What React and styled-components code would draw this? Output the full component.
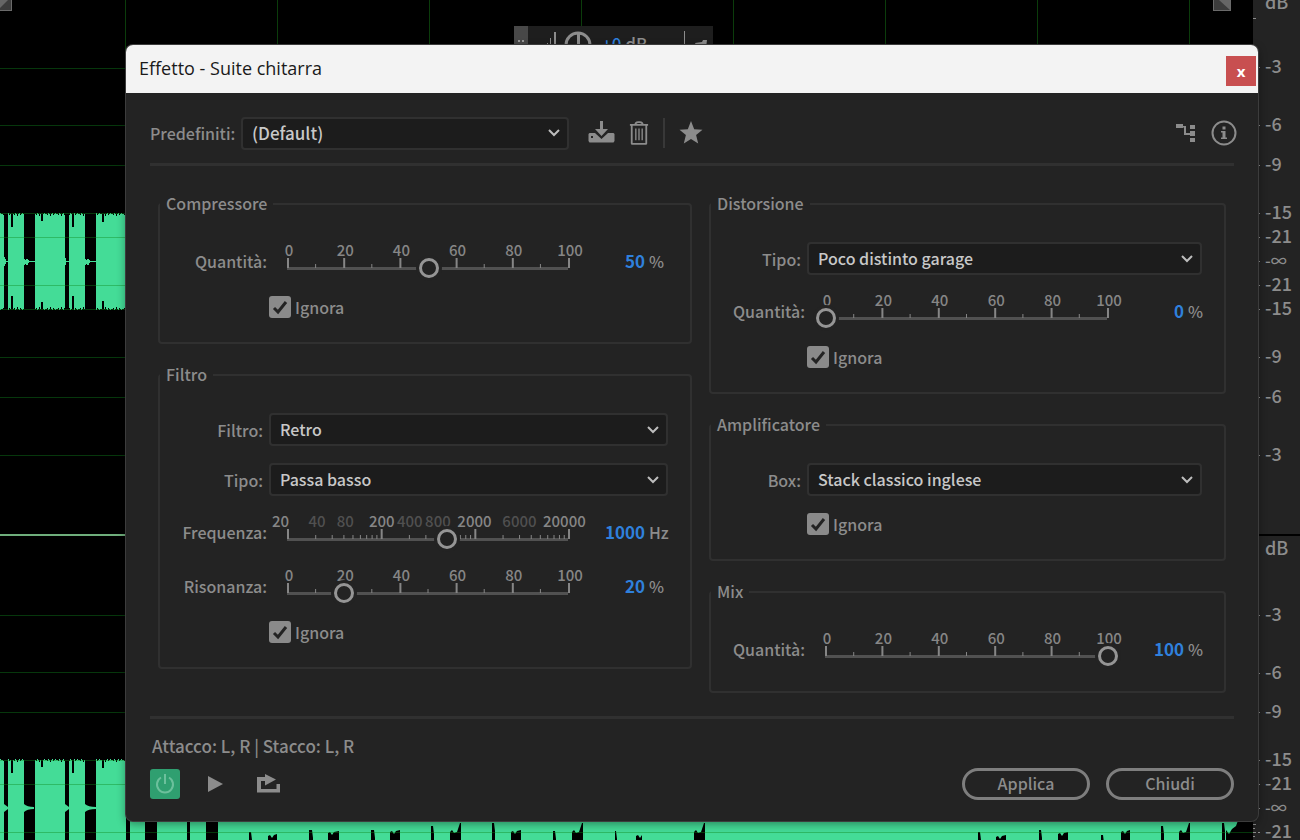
import React, { useId, useState } from 'react'
import styled, { createGlobalStyle, css } from 'styled-components'

const colors = {
  panel: '#232323',
  field: '#1c1c1c',
  line: '#303030',
  text: '#8c8c8c',
  dim: '#505050',
  bright: '#c8c8c8',
  blue: '#2f80dc',
  wave: '#44dc97',
  grid: '#0b3c0b',
}

const uiFont = "'Noto Sans CJK SC', 'Noto Sans', sans-serif"

const GlobalStyle = createGlobalStyle`
  * {
    box-sizing: border-box;
  }
  body {
    margin: 0;
    background: #000;
  }
  button, input, select {
    font: inherit;
    color: inherit;
  }
`

const Editor = styled.main`
  position: relative;
  display: flex;
  min-height: 100vh;
  overflow: hidden;
  background: #000;
  color: ${colors.text};
  font: 500 16px/24px ${uiFont};
`

const WaveCanvas = styled.svg`
  flex: 1;
  min-width: 0;
  align-self: stretch;
`

const RulerCanvas = styled.svg`
  flex: none;
  width: 47px;
  align-self: stretch;
  background: ${colors.panel};
  fill: ${colors.text};
  font-size: 18px;
`

/* floating volume control */
const Hud = styled.div`
  position: absolute;
  top: 26px;
  left: 514px;
  display: flex;
  align-items: center;
  width: 199px;
  height: 36px;
  background: #1e1e1e;
`

const HudArt = styled.svg`
  flex: none;
  width: 88px;
  height: 36px;
`

const HudValue = styled.span`
  flex: 1;
  font-size: 17px;
  b {
    color: ${colors.blue};
    font-weight: 500;
  }
`

const HudPin = styled.svg`
  flex: none;
  width: 32px;
  height: 36px;
`

/* effect window */
const Dialog = styled.section`
  position: absolute;
  top: 45px;
  left: 126px;
  right: 42px;
  border-radius: 7px;
  background: ${colors.panel};
  box-shadow: 0 0 0 1px #3c3c3c, 0 3px 10px rgba(0, 0, 0, 0.4);
`

const TitleBar = styled.header`
  display: flex;
  align-items: center;
  justify-content: space-between;
  height: 48px;
  padding: 4px 2px 0 13px;
  border-radius: 7px 7px 0 0;
  background: #f3f3f3;
  color: #1a1a1a;
`

const Title = styled.h1`
  margin: 0;
  padding-bottom: 6px;
  font: 400 18px/24px 'Open Sans', sans-serif;
`

const CloseButton = styled.button`
  width: 30px;
  height: 30px;
  padding: 0;
  border: 0;
  background: #c84f50;
  color: #fff;
  font: 700 15px/26px 'Open Sans', sans-serif;
`

const Body = styled.div`
  padding: 24px 24px 21px;
`

const PresetBar = styled.div`
  display: flex;
  align-items: center;
  height: 32px;
  margin: 0 -3px 14px 0;
`

const PresetLabel = styled.label`
  flex: none;
  width: 91px;
`

const PresetSelect = styled.div`
  flex: 0 1 328px;
  display: grid;
  font-size: 17px;
`

const IconButton = styled.button`
  display: flex;
  flex: none;
  padding: 0;
  border: 0;
  background: none;
  color: ${colors.text};
  svg {
    display: block;
  }
  svg:not([fill]) {
    fill: currentColor;
  }
`

const PresetTools = styled.div`
  display: flex;
  flex: 1;
  align-items: center;
  gap: 14px;
  padding-left: 19px;
`

const Divider = styled.span`
  width: 2px;
  height: 30px;
  background: #383838;
`

const Spacer = styled.span`
  flex: 1;
`

const Rule = styled.hr`
  height: 3px;
  margin: 0;
  border: 0;
  background: ${colors.line};
`

const Columns = styled.div`
  display: grid;
  grid-template-columns: 533fr 516fr;
  gap: 17px;
  align-items: start;
  padding: 26px 8px 23px;
`

const Column = styled.div`
  display: grid;
  gap: 19px;
`

const GroupBox = styled.fieldset`
  min-width: 0;
  margin: 0;
  padding: 26px 22px 24px 0;
  border: 2px solid ${colors.line};
  border-radius: 4px;
`

const Legend = styled.legend`
  padding: 0 6px 2px;
  line-height: 22px;
`

const Rows = styled.div`
  display: grid;
  gap: 17px;
`

const Row = styled.div`
  display: flex;
  align-items: center;
`

const RowLabel = styled.label`
  flex: none;
  width: ${p => p.$width}px;
  padding-right: ${p => (p.$inset ? 4 : 0)}px;
  text-align: right;
`

const SelectBox = styled.div`
  display: grid;
  flex: 1;
  margin-left: ${p => (p.$flush ? 0 : 2)}px;
  select, svg {
    grid-area: 1 / 1;
  }
  svg {
    align-self: center;
    justify-self: end;
    margin-right: 8px;
    pointer-events: none;
  }
`

const Select = styled.select`
  width: 100%;
  height: 33px;
  padding: 0 32px 1px 9px;
  appearance: none;
  border: 2px solid ${colors.line};
  border-radius: 4px;
  background: ${colors.field};
  color: ${colors.bright};
`

const SliderBox = styled.div`
  display: grid;
  flex: 1;
  height: 37px;
  margin-left: 21px;
  > * {
    grid-area: 1 / 1;
  }
`

const Scale = styled.svg`
  width: 100%;
  height: 37px;
  overflow: visible;
  fill: #868686;
  font: 500 15px ${uiFont};
  text-anchor: middle;
`

const thumb = css`
  box-sizing: border-box;
  width: 20px;
  height: 20px;
  border: 3px solid #959595;
  border-radius: 50%;
  background: ${colors.panel};
  box-shadow: 0 0 0 3px ${colors.panel};
`

const Range = styled.input`
  align-self: end;
  width: calc(100% + 20px);
  height: 20px;
  margin: 0 -10px 1px;
  appearance: none;
  background: none;
  &::-webkit-slider-thumb {
    appearance: none;
    ${thumb};
  }
  &::-moz-range-thumb {
    ${thumb};
  }
`

const Value = styled.div`
  display: grid;
  flex: none;
  grid-template-columns: 76px ${p => p.$unitWidth}px;
  gap: 4px;
  align-items: center;
`

const ValueInput = styled.input`
  width: 100%;
  height: 24px;
  padding: 0;
  border: 0;
  background: none;
  color: ${colors.blue};
  font-size: 17px;
  font-weight: 700;
  text-align: right;
`

const CheckLabel = styled.label`
  display: flex;
  align-items: center;
  gap: 4px;
  height: 22px;
  margin-left: ${p => p.$indent + 2}px;
`

const CheckBox = styled.span`
  display: grid;
  input, svg {
    grid-area: 1 / 1;
  }
  input {
    width: 22px;
    height: 22px;
    margin: 0;
    appearance: none;
    border-radius: 3px;
    background: #8a8a8a;
  }
  svg {
    pointer-events: none;
  }
  input:not(:checked) + svg {
    visibility: hidden;
  }
`

const Status = styled.p`
  margin: 15px 0 10px;
  padding-left: 2px;
  font-size: 17px;
`

const Footer = styled.footer`
  display: flex;
  align-items: center;
  justify-content: space-between;
`

const Transport = styled.div`
  display: flex;
  align-items: center;
  gap: 27px;
`

const PowerButton = styled(IconButton)`
  align-items: center;
  justify-content: center;
  width: 30px;
  height: 30px;
  border-radius: 3px;
  background: #2f9f70;
  color: #6cc09c;
`

const Actions = styled.div`
  display: flex;
  gap: 16px;
`

const PillButton = styled.button`
  width: 128px;
  height: 32px;
  padding: 0 0 2px;
  border: 3px solid #7e7e7e;
  border-radius: 16px;
  background: none;
  color: ${colors.text};
  line-height: 24px;
`

const gridRows = [68, 125, 165, 213, 237, 285, 309, 357, 397, 455, 615, 672, 712, 760, 784, 832]
const gridCols = [125, 277, 429, 581, 733, 885, 1037, 1189]

const bursts = [
  { from: 0, to: 4 },
  { from: 8, to: 24, notch: 11, depth: 14 },
  { from: 35, to: 65, notch: 41, depth: 8 },
  { from: 69, to: 85, notch: 72, depth: 14 },
  { from: 96, to: 126, notch: 102, depth: 9 },
]

const jitter = i => [0, 1, 1, 2, 0, 1, 3, 1, 0, 2, 1][i % 11]

const burstPath = ({ from, to, notch, depth }, top, bottom) => {
  const up = []
  const down = []
  for (let x = from; x < to; x += 1) {
    const d = x === notch || x === notch + 1 ? depth : jitter(x)
    up.push(`${x} ${top + d}`, `${x + 1} ${top + d}`)
    down.unshift(`${x + 1} ${bottom - d}`, `${x} ${bottom - d}`)
  }
  return `M${[...up, ...down].join('L')}Z`
}

// dips at the lower edge: [x, width, top]
const dips = [
  [249, 2, 832], [309, 3, 830], [371, 3, 830], [431, 2, 826], [492, 2, 823],
  [553, 2, 831], [615, 1, 831], [978, 2, 832], [1039, 2, 830], [1101, 2, 835],
  [1161, 2, 826], [1222, 2, 823],
]
const crags = [
  [268, 9, 834], [328, 11, 831], [390, 10, 830], [511, 10, 830], [636, 6, 834],
  [996, 10, 835], [1058, 10, 832], [1121, 9, 830],
]
const saws = [450, 572, 694, 1179]

const Waveform = () => (
  <WaveCanvas aria-hidden="true" fill={colors.wave}>
    {gridCols.map(x => <rect key={x} x={x} width="1" height="100%" fill={colors.grid} />)}
    {bursts.map(b => (
      <g key={b.from}>
        <path d={burstPath(b, 213, 310)} />
        <path d={burstPath(b, 759, 858)} />
      </g>
    ))}
    <rect y="261" width="126" height="1" />
    <path d="M24 259h1v1h1v-1h2v1h1v3h-1v2h-2v-1h-1v1h-1zM85 259h1v1h1v-1h2v1h1v3h-1v2h-2v-1h-1v1h-1zM4 257h1v2h1v5h-1v2h-1zM65 258h1v7h-1z" />
    <path d="M24 804q3 3 10 3v2q-7 0-10 3zM85 804q3 3 11 3v2q-8 0-11 3zM4 804l4 3v2l-4 3zM65 804l4 3v2l-4 3z" />
    <rect x="130" y="815" width="15" height="100%" />
    <rect x="157" y="815" width="30" height="100%" />
    <rect x="190" y="815" width="16" height="100%" />
    <rect x="218" y="815" width="1008" height="100%" />
    <path d="M1226 815H1240L1236 826L1232 829L1229 834L1226 830Z" />
    <g fill="#000">
      {dips.map(([x, w, y]) => <path key={x} d={`M${x} 900V${y}h${w}l1 8V900z`} />)}
      {crags.map(([x, w, y]) => (
        <path key={x} d={`M${x} 900V${y + 2}l2 -1l2 3l2 -3l${w - 6} -1V900z`} />
      ))}
      {saws.map(x => <path key={x} d={`M${x} 900V832l2 -2l2 3l3 -1l3 -9h1V900z`} />)}
    </g>
    {gridRows.map(y => (
      <rect key={y} y={y} width="100%" height="1" fill="#0f8a1e" opacity="0.4" />
    ))}
    <rect y="534" width="126" height="2" fill="#6fae7c" />
    <path d="M0 0H12V11H0ZM1213 0H1231V11H1213Z" fill="#6a6a6a" />
    <path d="M0 0H11V10H0ZM1214 0H1230V10H1214Z" fill="#3c3c3c" />
    <path d="M0 8L8 0H0ZM1219 0H1230V10Z" fill="#666" />
  </WaveCanvas>
)

const rulerMarks = [
  [3, 'dB'], [67, '-3'], [125, '-6'], [165, '-9'], [213, '-15'], [237, '-21'], [261, '-∞'],
  [285, '-21'], [309, '-15'], [357, '-9'], [397, '-6'], [455, '-3'], [549, 'dB'], [615, '-3'],
  [673, '-6'], [712, '-9'], [760, '-15'], [784, '-21'], [808, '-∞'], [832, '-21'],
]

const Ruler = () => (
  <RulerCanvas role="img" aria-label="dB">
    <rect y="18" width="3" height="1" />
    <rect x="5" y="534" width="42" height="2" fill="#000" />
    {rulerMarks.map(([y, text]) => (
      <g key={y}>
        {text !== 'dB' && <rect x="5" y={y} width="2" height="1" />}
        <text x="12" y={y + 6} fontSize={text === '-∞' ? 16 : undefined}>{text}</text>
      </g>
    ))}
    <path d="M0 824h3v1H0zM0 828h2v1H0zM0 832h3v1H0zM0 836h2v1H0z" />
  </RulerCanvas>
)

const VolumeHud = () => (
  <Hud>
    <HudArt viewBox="0 0 88 36" fill={colors.text}>
      <rect width="14" height="36" fill="#484848" />
      <path d="M4 14h2v2H4zM8 14h2v2H8zM4 18h2v2H4zM8 18h2v2H8z" fill="#999" />
      <path d="M33 17h1v12h-1zM36 12h1v17h-1zM40 6h2v23h-2z" />
      <circle cx="64" cy="19" r="12" fill="none" stroke={colors.text} strokeWidth="3" />
      <path d="M63 7h3v12h-3z" />
    </HudArt>
    <HudValue><b>+0</b> dB</HudValue>
    <HudPin viewBox="0 0 32 36" fill={colors.text}>
      <path d="M3 5h1v28H3z" />
      <path d="M14 17l7-1 1-2h4l-1 8-6 6z" />
    </HudPin>
  </Hud>
)

const Dropdown = ({ id, options, flush }) => (
  <SelectBox $flush={flush}>
    <Select id={id}>
      {options.map(o => <option key={o}>{o}</option>)}
    </Select>
    <svg width="14" height="10" viewBox="0 0 14 10" fill="none" stroke="#bdbdbd" strokeWidth="2">
      <path d="M2 2L7 7L12 2" />
    </svg>
  </SelectBox>
)

const SelectRow = ({ label, labelWidth, options }) => {
  const id = useId()
  return (
    <Row>
      <RowLabel htmlFor={id} $width={labelWidth} $inset>{label}</RowLabel>
      <Dropdown id={id} options={options} />
    </Row>
  )
}

const linear = {
  labels: [0, 20, 40, 60, 80, 100].map(v => ({ at: v, text: v })),
  ticks: [0, 10, 20, 30, 40, 50, 60, 70, 80, 90, 100].map(v => ({ at: v, major: v % 20 === 0 })),
  format: v => Math.round(v),
}

const logPosition = hz => (Math.log10(hz / 20) / 3) * 100

const frequency = {
  labels: [
    { at: -3, text: 20 },
    { at: 10, text: 40, dim: true },
    { at: 20, text: 80, dim: true },
    { at: 33, text: 200 },
    { at: 43, text: 400, dim: true },
    { at: 53, text: 800, dim: true },
    { at: 66, text: 2000 },
    { at: 82, text: 6000, dim: true },
    { at: 98, text: 20000 },
  ],
  ticks: [20, 200, 2000]
    .flatMap(base => [1, 2, 3, 4, 5, 6, 7, 8, 9].map(k => ({ at: logPosition(base * k), major: k === 1 })))
    .concat({ at: 100, major: true }),
  format: v => Math.round(20 * 10 ** ((v / 100) * 3)),
}

const SliderRow = ({ label, labelWidth, scale = linear, initial, unit = '%', unitWidth }) => {
  const id = useId()
  const [position, setPosition] = useState(initial)
  return (
    <Row>
      <RowLabel htmlFor={id} $width={labelWidth}>{label}</RowLabel>
      <SliderBox>
        <Scale aria-hidden="true">
          <rect x="-1" y="25" width="100%" height="3" fill="#515151" />
          {scale.ticks.map(({ at, major }) => (
            <rect key={at} x={`${at}%`} y={major ? 16 : 22} width={major ? 2 : 1} height={major ? 10 : 4} transform="translate(-1 0)" />
          ))}
          {scale.labels.map(({ at, text, dim }) => (
            <text key={text} x={`${at}%`} y="14" dx="1" fill={dim ? colors.dim : undefined}>{text}</text>
          ))}
        </Scale>
        <Range
          id={id}
          type="range"
          min="0"
          max="100"
          step="any"
          value={position}
          onChange={e => setPosition(Number(e.target.value))}
        />
      </SliderBox>
      <Value $unitWidth={unitWidth}>
        <ValueInput aria-label={label} readOnly value={scale.format(position)} />
        <span>{unit}</span>
      </Value>
    </Row>
  )
}

const Bypass = ({ indent }) => (
  <CheckLabel $indent={indent}>
    <CheckBox>
      <input type="checkbox" defaultChecked />
      <svg width="22" height="22" viewBox="0 0 22 22" fill="none" stroke={colors.panel} strokeWidth="3">
        <path d="M5 12L9 16L17 6" />
      </svg>
    </CheckBox>
    Ignora
  </CheckLabel>
)

const Group = ({ title, children }) => (
  <GroupBox>
    <Legend>{title}</Legend>
    <Rows>{children}</Rows>
  </GroupBox>
)

const left = { labelWidth: 107, unitWidth: 19 }
const right = { labelWidth: 94, unitWidth: 14 }

const App = () => (
  <>
    <GlobalStyle />
    <Editor>
      <Waveform />
      <Ruler />
      <VolumeHud />
      <Dialog role="dialog" aria-labelledby="dialog-title">
        <TitleBar>
          <Title id="dialog-title">Effetto - Suite chitarra</Title>
          <CloseButton>x</CloseButton>
        </TitleBar>
        <Body>
          <PresetBar>
            <PresetLabel htmlFor="preset">Predefiniti:</PresetLabel>
            <PresetSelect>
              <Dropdown id="preset" options={['(Default)']} flush />
            </PresetSelect>
            <PresetTools>
              <IconButton aria-label="Salva">
                <svg width="27" height="26" viewBox="0 0 27 26">
                  <path d="M12 1h3v8h5l-6.500 7L7 9h5z" />
                  <path fillRule="evenodd" d="M1.500 13H7l6.500 6L20 13h5.500l1 1v7l-1 1.500h-24L.500 21v-7zM3 16v2h2v-2z" />
                </svg>
              </IconButton>
              <IconButton aria-label="Elimina">
                <svg width="20" height="28" viewBox="0 0 22 28" fill="none" stroke="currentColor">
                  <path d="M1 5h20M3 6v19.500q0 .500.500.500h15q.500 0 .500-.500V6M7 5q0-3 3-3h2q3 0 3 3" strokeWidth="2" />
                  <path d="M7.500 9v13M11 9v13M14.500 9v13" strokeWidth="1.500" />
                </svg>
              </IconButton>
              <Divider />
              <IconButton aria-label="Preferiti">
                <svg width="24" height="24" viewBox="0 0 24 24">
                  <path d="M12 0l3.200 8.200 8.300.600-6.400 5.300 2.100 8.400L12 17.900l-7.200 4.600 2.100-8.400L.500 8.800l8.300-.600z" />
                </svg>
              </IconButton>
              <Spacer />
              <IconButton aria-label="Canali">
                <svg width="22" height="22" viewBox="0 0 22 22">
                  <path d="M1 2h7v2h3v7h4v-2h5v5h-5v-1H9V5.500H8V6H1zM15 3h5v4h-5zM15 16h5v4h-5z" />
                </svg>
              </IconButton>
              <IconButton aria-label="Informazioni">
                <svg width="26" height="26" viewBox="0 0 26 26">
                  <circle cx="13" cy="13" r="11.500" fill="none" stroke="currentColor" strokeWidth="2" />
                  <path d="M11.500 6.500h3v3h-3zM10 11h4.500v6.500H16v1.500h-6v-1.500h1.500v-5H10z" />
                </svg>
              </IconButton>
            </PresetTools>
          </PresetBar>
          <Rule />
          <Columns>
            <Column>
              <Group title="Compressore">
                <SliderRow label="Quantità:" initial={50} {...left} />
                <Bypass indent={left.labelWidth} />
              </Group>
              <Group title="Filtro">
                <SelectRow label="Filtro:" options={['Retro']} {...left} />
                <SelectRow label="Tipo:" options={['Passa basso']} {...left} />
                <SliderRow label="Frequenza:" scale={frequency} initial={logPosition(1000)} unit="Hz" {...left} />
                <SliderRow label="Risonanza:" initial={20} {...left} />
                <Bypass indent={left.labelWidth} />
              </Group>
            </Column>
            <Column>
              <Group title="Distorsione">
                <SelectRow label="Tipo:" options={['Poco distinto garage']} {...right} />
                <SliderRow label="Quantità:" initial={0} {...right} />
                <Bypass indent={right.labelWidth} />
              </Group>
              <Group title="Amplificatore">
                <SelectRow label="Box:" options={['Stack classico inglese']} {...right} />
                <Bypass indent={right.labelWidth} />
              </Group>
              <Group title="Mix">
                <SliderRow label="Quantità:" initial={100} {...right} />
              </Group>
            </Column>
          </Columns>
          <Rule />
          <Status>Attacco: L, R | Stacco: L, R</Status>
          <Footer>
            <Transport>
              <PowerButton aria-label="Attiva effetto">
                <svg width="20" height="22" viewBox="0 0 20 22" fill="none" stroke="currentColor" strokeWidth="2">
                  <path d="M6 4.500a8 8 0 1 0 8 0M10 1v10" />
                </svg>
              </PowerButton>
              <IconButton aria-label="Riproduci">
                <svg width="16" height="16" viewBox="0 0 16 16">
                  <path d="M1 0l15 8-15 8z" />
                </svg>
              </IconButton>
              <IconButton aria-label="Ciclo">
                <svg width="36" height="20" viewBox="0 0 36 20">
                  <path d="M7 3h8V0l11 5.500-11 6V7h-4v8h15.500v-5H30v8.500H7z" />
                </svg>
              </IconButton>
            </Transport>
            <Actions>
              <PillButton>Applica</PillButton>
              <PillButton>Chiudi</PillButton>
            </Actions>
          </Footer>
        </Body>
      </Dialog>
    </Editor>
  </>
)

export default App
